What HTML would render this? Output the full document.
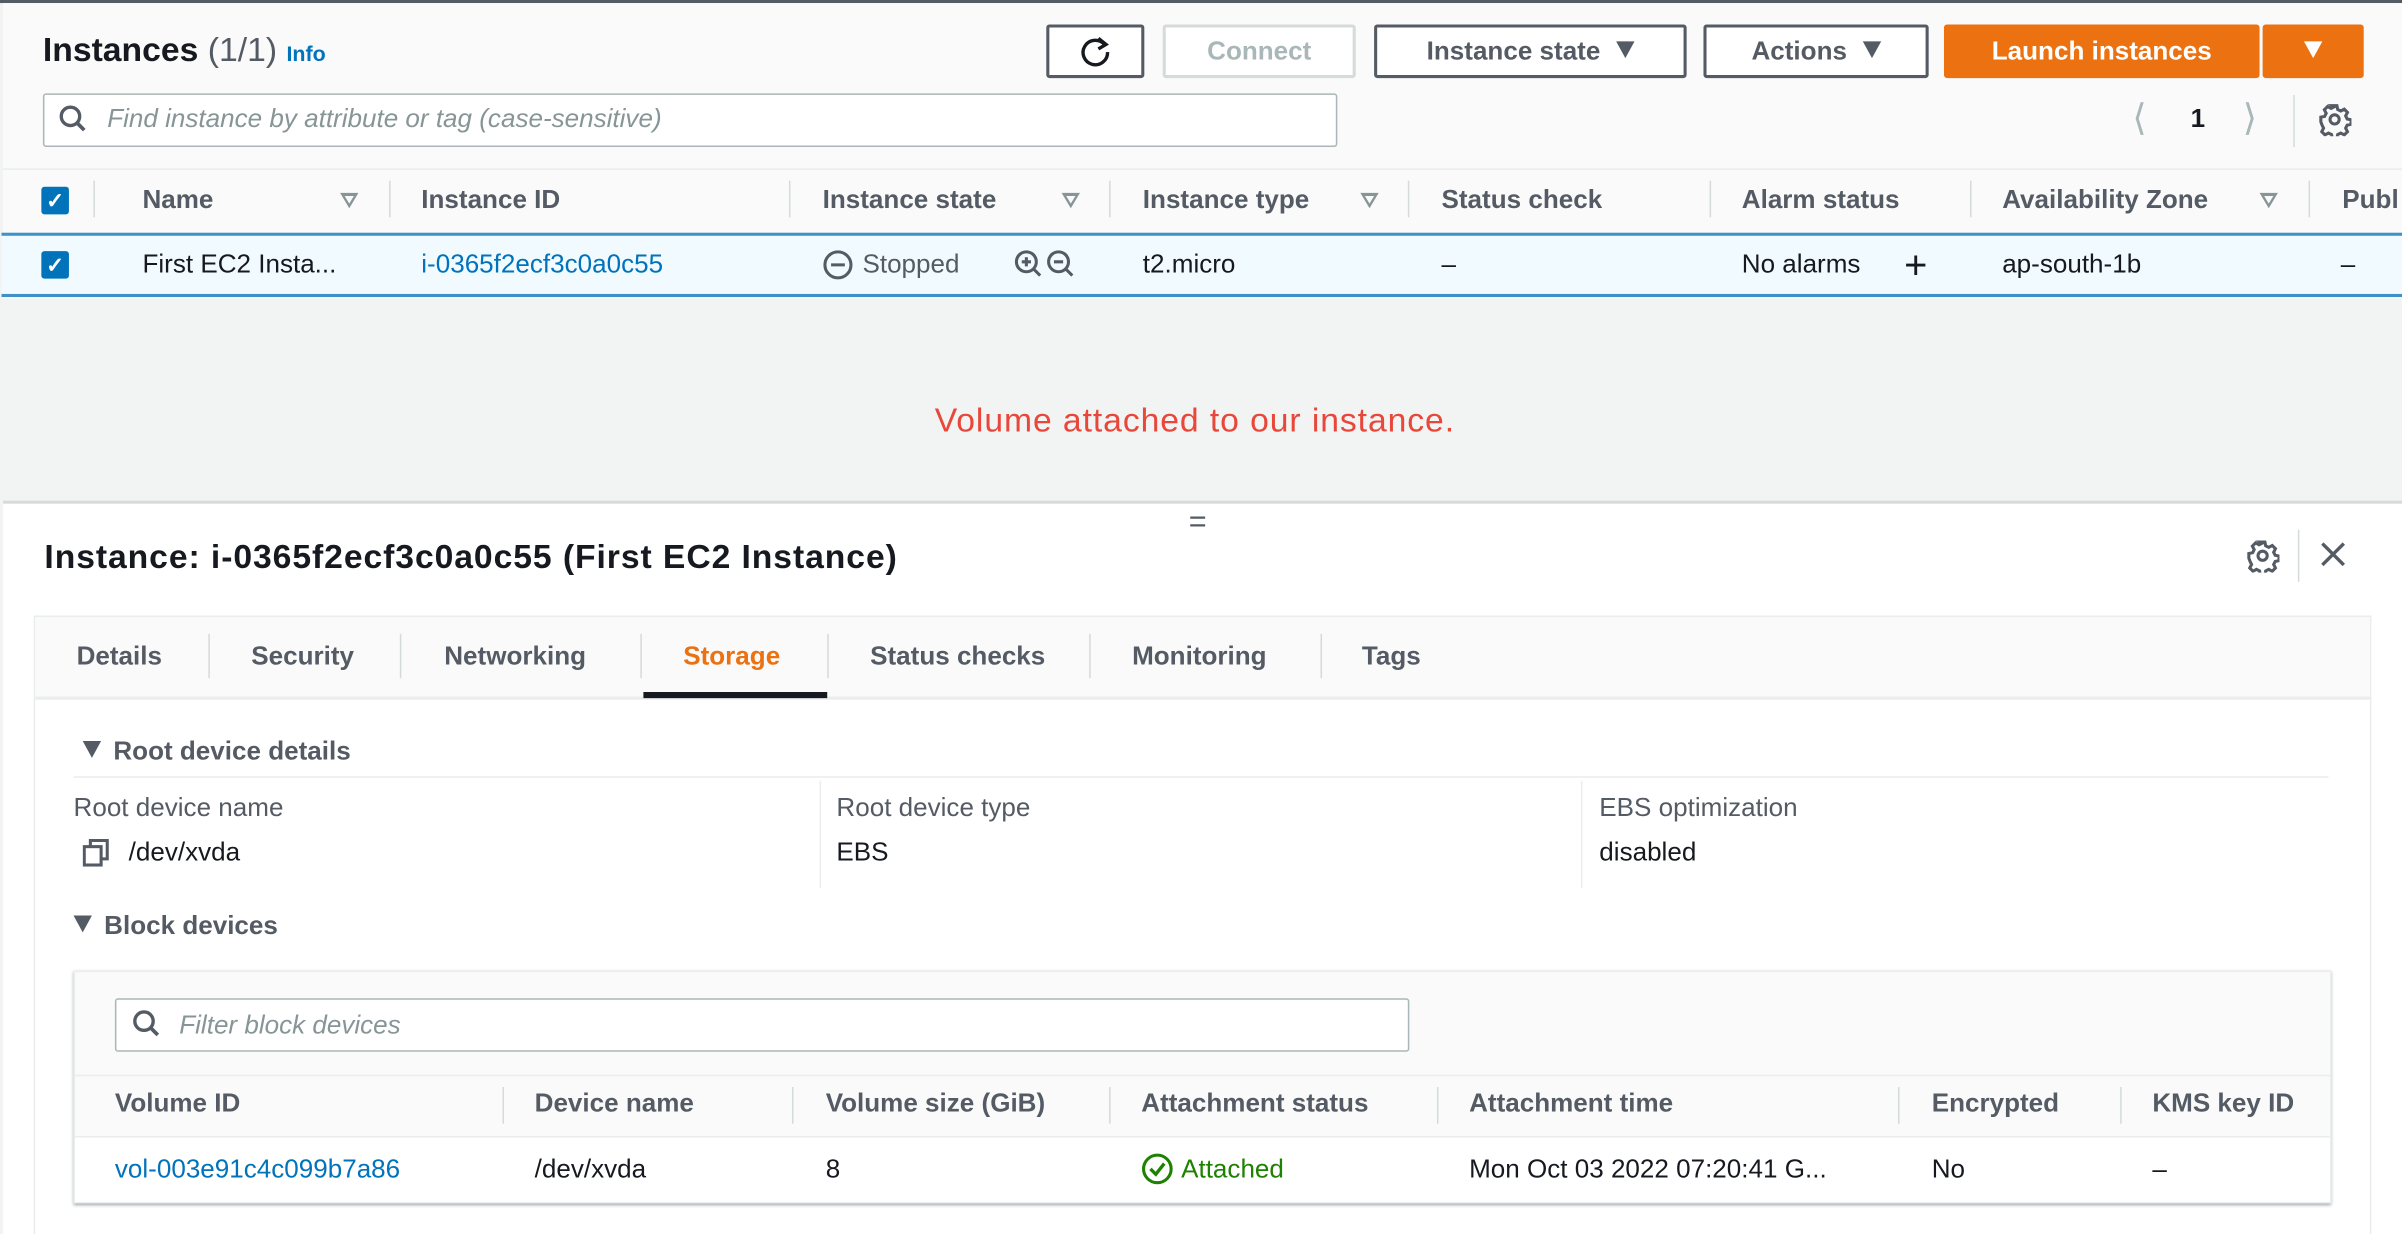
<!DOCTYPE html>
<html><head><meta charset="utf-8"><style>
*{box-sizing:border-box;margin:0;padding:0}
html,body{width:2402px;height:1234px;overflow:hidden;background:#fff}
#w{position:absolute;left:0;top:0;width:1568px;height:806px;transform:scale(1.5319,1.5310);transform-origin:0 0;font-family:"Liberation Sans",sans-serif;font-size:17px;color:#16191f;background:#f2f3f3}
.a{position:absolute;white-space:nowrap;line-height:20px}
.h{color:#545b64;font-weight:bold}
.btn{position:absolute;top:16px;height:35px;border:2px solid #545b64;border-radius:2px;background:#fff;font-weight:bold;color:#545b64;text-align:center;line-height:31px;font-size:17px}
.sep{position:absolute;width:1px;background:#d5dbdb}
.tri{display:inline-block;width:0;height:0;border-left:6px solid transparent;border-right:6px solid transparent;border-top:11px solid #545b64;margin-left:10px;vertical-align:1px}
.ftri{position:absolute;width:0;height:0;border-left:6px solid transparent;border-right:6px solid transparent;border-top:10px solid #879596}
.ftri:after{content:"";position:absolute;left:-3px;top:-8px;border-left:3px solid transparent;border-right:3px solid transparent;border-top:5px solid #fafafa}
.cb{position:absolute;width:18px;height:18px;background:#0073bb;border-radius:2px;color:#fff;font-size:14px;line-height:18px;text-align:center;font-weight:bold}
.st{display:inline-block;width:0;height:0;border-left:6px solid transparent;border-right:6px solid transparent;border-top:11px solid #545b64;margin-right:8px;vertical-align:1px}
</style></head><body><div id="w">
<div style="position:absolute;left:0;top:0;width:1568px;height:2px;background:#545b64"></div>
<div style="position:absolute;left:2px;top:2px;width:1566px;height:193px;background:#fafafa"></div>
<div class="a" style="left:28px;top:21px;font-size:22px;line-height:24px;font-weight:bold">Instances <span style="font-weight:normal;color:#545b64">(1/1)</span> <span style="font-size:14px;color:#0073bb;font-weight:bold">Info</span></div>
<div class="btn" style="left:683px;width:64px"><svg width="22" height="22" viewBox="0 0 22 22" style="margin-top:5px"><path d="M17 6A8 8 0 1 0 19 11" fill="none" stroke="#16191f" stroke-width="2.2"/><path d="M13 2L18 6L13 9" fill="none" stroke="#16191f" stroke-width="2.2"/></svg></div>
<div class="btn" style="left:759px;width:126px;border-color:#d5dbdb;color:#aab7b8">Connect</div>
<div class="btn" style="left:897px;width:204px">Instance state<span class="tri"></span></div>
<div class="btn" style="left:1112px;width:147px">Actions<span class="tri"></span></div>
<div class="btn" style="left:1269px;width:206px;background:#ec7211;border-color:#ec7211;color:#fff">Launch instances</div>
<div class="btn" style="left:1477px;width:66px;background:#ec7211;border-color:#ec7211"><span class="tri" style="border-top-color:#fff;margin:0"></span></div>
<div style="position:absolute;left:28px;top:61px;width:845px;height:35px;border:1px solid #aab7b8;border-radius:2px;background:#fff"></div>
<svg style="position:absolute;left:38px;top:68px" width="20" height="20"><circle cx="8" cy="8" r="6" fill="none" stroke="#545b64" stroke-width="2.2"/><path d="M12 12L17 17" stroke="#545b64" stroke-width="2.4"/></svg>
<div class="a" style="left:70px;top:68px;font-style:italic;color:#879596">Find instance by attribute or tag (case-sensitive)</div>
<div class="a" style="left:1392px;top:64px;font-size:24px;line-height:28px;color:#aab7b8">&#10216;</div>
<div class="a" style="left:1430px;top:68px;font-weight:bold">1</div>
<div class="a" style="left:1464px;top:64px;font-size:24px;line-height:28px;color:#aab7b8">&#10217;</div>
<div class="sep" style="left:1497px;top:62px;height:34px"></div>
<svg style="position:absolute;left:1513px;top:67px" width="22" height="22" viewBox="0 0 22 22"><g fill="none" stroke="#545b64" stroke-width="2"><circle cx="11" cy="11" r="3"/><path d="M9.5 2h3l.5 2.5 2 1 2.3-1.2 2.1 2.1-1.2 2.3 1 2 2.5.5v3l-2.5.5-1 2 1.2 2.3-2.1 2.1-2.3-1.2-2 1-.5 2.5h-3l-.5-2.5-2-1-2.3 1.2-2.1-2.1 1.2-2.3-1-2L2 12.5v-3l2.5-.5 1-2-1.2-2.3 2.1-2.1 2.3 1.2 2-1z"/></g></svg>
<div style="position:absolute;left:2px;top:110px;width:1566px;height:1px;background:#eaeded"></div>
<div class="cb" style="left:27px;top:122px">&#10003;</div>
<div class="sep" style="left:61px;top:118px;height:24px"></div>
<div class="a h" style="left:93px;top:121px">Name</div><div class="ftri" style="left:222px;top:126px"></div>
<div class="sep" style="left:254px;top:118px;height:24px"></div>
<div class="a h" style="left:275px;top:121px">Instance ID</div>
<div class="sep" style="left:515px;top:118px;height:24px"></div>
<div class="a h" style="left:537px;top:121px">Instance state</div><div class="ftri" style="left:693px;top:126px"></div>
<div class="sep" style="left:724px;top:118px;height:24px"></div>
<div class="a h" style="left:746px;top:121px">Instance type</div><div class="ftri" style="left:888px;top:126px"></div>
<div class="sep" style="left:919px;top:118px;height:24px"></div>
<div class="a h" style="left:941px;top:121px">Status check</div>
<div class="sep" style="left:1116px;top:118px;height:24px"></div>
<div class="a h" style="left:1137px;top:121px">Alarm status</div>
<div class="sep" style="left:1286px;top:118px;height:24px"></div>
<div class="a h" style="left:1307px;top:121px">Availability Zone</div><div class="ftri" style="left:1475px;top:126px"></div>
<div class="sep" style="left:1507px;top:118px;height:24px"></div>
<div class="a h" style="left:1529px;top:121px">Publ</div>
<div style="position:absolute;left:1px;top:152px;width:1567px;height:42px;background:#f1faff;border-top:2px solid #3f92c9;border-bottom:2px solid #3f92c9"></div>
<div class="cb" style="left:27px;top:164px">&#10003;</div>
<div class="a" style="left:93px;top:163px">First EC2 Insta...</div>
<div class="a" style="left:275px;top:163px;color:#0073bb">i-0365f2ecf3c0a0c55</div>
<svg style="position:absolute;left:537px;top:163px" width="20" height="20"><circle cx="10" cy="10" r="8.5" fill="none" stroke="#545b64" stroke-width="2"/><path d="M5.5 10H14.5" stroke="#545b64" stroke-width="2"/></svg>
<div class="a" style="left:563px;top:163px;color:#545b64">Stopped</div>
<svg style="position:absolute;left:662px;top:162px" width="42" height="22"><g fill="none" stroke="#545b64" stroke-width="2"><circle cx="8" cy="9" r="6.5"/><path d="M13 14L17 18M5 9H11M8 6V12"/><circle cx="29" cy="9" r="6.5"/><path d="M34 14L38 18M26 9H32"/></g></svg>
<div class="a" style="left:746px;top:163px">t2.micro</div>
<div class="a" style="left:941px;top:163px">–</div>
<div class="a" style="left:1137px;top:163px">No alarms</div>
<div class="a" style="left:1243px;top:160px;font-size:26px;line-height:26px">+</div>
<div class="a" style="left:1307px;top:163px">ap-south-1b</div>
<div class="a" style="left:1528px;top:163px">–</div>
<div class="a" style="left:0;width:1560px;text-align:center;top:263px;font-size:22px;line-height:24px;letter-spacing:0.6px;color:#e8473a">Volume attached to our instance.</div>
<div style="position:absolute;left:2px;top:327px;width:1566px;height:479px;background:#fff;border-top:2px solid #d5dbdb"></div>
<div class="a" style="left:776px;top:331px;font-size:20px;color:#545b64">=</div>
<div class="a" style="left:29px;top:352px;font-size:22px;line-height:24px;letter-spacing:0.6px;font-weight:bold">Instance: i-0365f2ecf3c0a0c55 (First EC2 Instance)</div>
<svg style="position:absolute;left:1466px;top:352px" width="22" height="22" viewBox="0 0 22 22"><g fill="none" stroke="#545b64" stroke-width="2"><circle cx="11" cy="11" r="3"/><path d="M9.5 2h3l.5 2.5 2 1 2.3-1.2 2.1 2.1-1.2 2.3 1 2 2.5.5v3l-2.5.5-1 2 1.2 2.3-2.1 2.1-2.3-1.2-2 1-.5 2.5h-3l-.5-2.5-2-1-2.3 1.2-2.1-2.1 1.2-2.3-1-2L2 12.5v-3l2.5-.5 1-2-1.2-2.3 2.1-2.1 2.3 1.2 2-1z"/></g></svg>
<div class="sep" style="left:1500px;top:346px;height:34px"></div>
<svg style="position:absolute;left:1514px;top:353px" width="18" height="18"><path d="M2 2L16 16M16 2L2 16" stroke="#545b64" stroke-width="2.2"/></svg>
<div style="position:absolute;left:22px;top:402px;width:1526px;height:404px;border:1px solid #eaeded;border-bottom:none;background:#fff"></div>
<div style="position:absolute;left:23px;top:403px;width:1524px;height:54px;background:#fafafa;border-bottom:2px solid #eaeded"></div>
<div class="a h" style="left:50px;top:419px">Details</div>
<div class="sep" style="left:136px;top:414px;height:29px"></div>
<div class="a h" style="left:164px;top:419px">Security</div>
<div class="sep" style="left:261px;top:414px;height:29px"></div>
<div class="a h" style="left:290px;top:419px">Networking</div>
<div class="sep" style="left:418px;top:414px;height:29px"></div>
<div class="a" style="left:446px;top:419px;font-weight:bold;color:#ec7211">Storage</div>
<div style="position:absolute;left:420px;top:452px;width:120px;height:4px;background:#16191f"></div>
<div class="sep" style="left:540px;top:414px;height:29px"></div>
<div class="a h" style="left:568px;top:419px">Status checks</div>
<div class="sep" style="left:711px;top:414px;height:29px"></div>
<div class="a h" style="left:739px;top:419px">Monitoring</div>
<div class="sep" style="left:862px;top:414px;height:29px"></div>
<div class="a h" style="left:889px;top:419px">Tags</div>
<div class="a" style="left:54px;top:481px;font-weight:bold;color:#545b64"><span class="st"></span>Root device details</div>
<div style="position:absolute;left:48px;top:507px;width:1472px;height:1px;background:#eaeded"></div>
<div class="sep" style="left:535px;top:510px;height:70px;background:#eaeded"></div>
<div class="sep" style="left:1032px;top:510px;height:70px;background:#eaeded"></div>
<div class="a" style="left:48px;top:518px;color:#545b64">Root device name</div>
<div class="a" style="left:546px;top:518px;color:#545b64">Root device type</div>
<div class="a" style="left:1044px;top:518px;color:#545b64">EBS optimization</div>
<svg style="position:absolute;left:54px;top:548px" width="18" height="19"><g fill="none" stroke="#545b64" stroke-width="2"><rect x="1" y="5" width="11" height="12"/><path d="M5 5V1H16V13H12"/></g></svg>
<div class="a" style="left:84px;top:547px">/dev/xvda</div>
<div class="a" style="left:546px;top:547px">EBS</div>
<div class="a" style="left:1044px;top:547px">disabled</div>
<div class="a" style="left:48px;top:595px;font-weight:bold;color:#545b64"><span class="st"></span>Block devices</div>
<div style="position:absolute;left:48px;top:634px;width:1474px;height:152px;border:1px solid #eaeded;background:#fafafa;box-shadow:0 1px 2px rgba(0,28,36,.4)"></div>
<div style="position:absolute;left:75px;top:652px;width:845px;height:35px;border:1px solid #aab7b8;border-radius:2px;background:#fff"></div>
<svg style="position:absolute;left:86px;top:659px" width="20" height="20"><circle cx="8" cy="8" r="6" fill="none" stroke="#545b64" stroke-width="2.2"/><path d="M12 12L17 17" stroke="#545b64" stroke-width="2.4"/></svg>
<div class="a" style="left:117px;top:660px;font-style:italic;color:#879596">Filter block devices</div>
<div style="position:absolute;left:49px;top:702px;width:1472px;height:1px;background:#eaeded"></div>
<div class="a h" style="left:75px;top:711px">Volume ID</div>
<div class="sep" style="left:328px;top:710px;height:24px"></div>
<div class="a h" style="left:349px;top:711px">Device name</div>
<div class="sep" style="left:517px;top:710px;height:24px"></div>
<div class="a h" style="left:539px;top:711px">Volume size (GiB)</div>
<div class="sep" style="left:724px;top:710px;height:24px"></div>
<div class="a h" style="left:745px;top:711px">Attachment status</div>
<div class="sep" style="left:938px;top:710px;height:24px"></div>
<div class="a h" style="left:959px;top:711px">Attachment time</div>
<div class="sep" style="left:1239px;top:710px;height:24px"></div>
<div class="a h" style="left:1261px;top:711px">Encrypted</div>
<div class="sep" style="left:1384px;top:710px;height:24px"></div>
<div class="a h" style="left:1405px;top:711px">KMS key ID</div>
<div style="position:absolute;left:49px;top:742px;width:1472px;height:43px;background:#fff;border-top:1px solid #eaeded"></div>
<div class="a" style="left:75px;top:754px;color:#0073bb">vol-003e91c4c099b7a86</div>
<div class="a" style="left:349px;top:754px">/dev/xvda</div>
<div class="a" style="left:539px;top:754px">8</div>
<svg style="position:absolute;left:745px;top:753px" width="21" height="21"><circle cx="10.5" cy="10.5" r="9" fill="none" stroke="#1d8102" stroke-width="2"/><path d="M6 10.5L9.5 14L15 7" fill="none" stroke="#1d8102" stroke-width="2.2"/></svg>
<div class="a" style="left:771px;top:754px;color:#1d8102">Attached</div>
<div class="a" style="left:959px;top:754px">Mon Oct 03 2022 07:20:41 G...</div>
<div class="a" style="left:1261px;top:754px">No</div>
<div class="a" style="left:1405px;top:754px">–</div>
</div></body></html>
